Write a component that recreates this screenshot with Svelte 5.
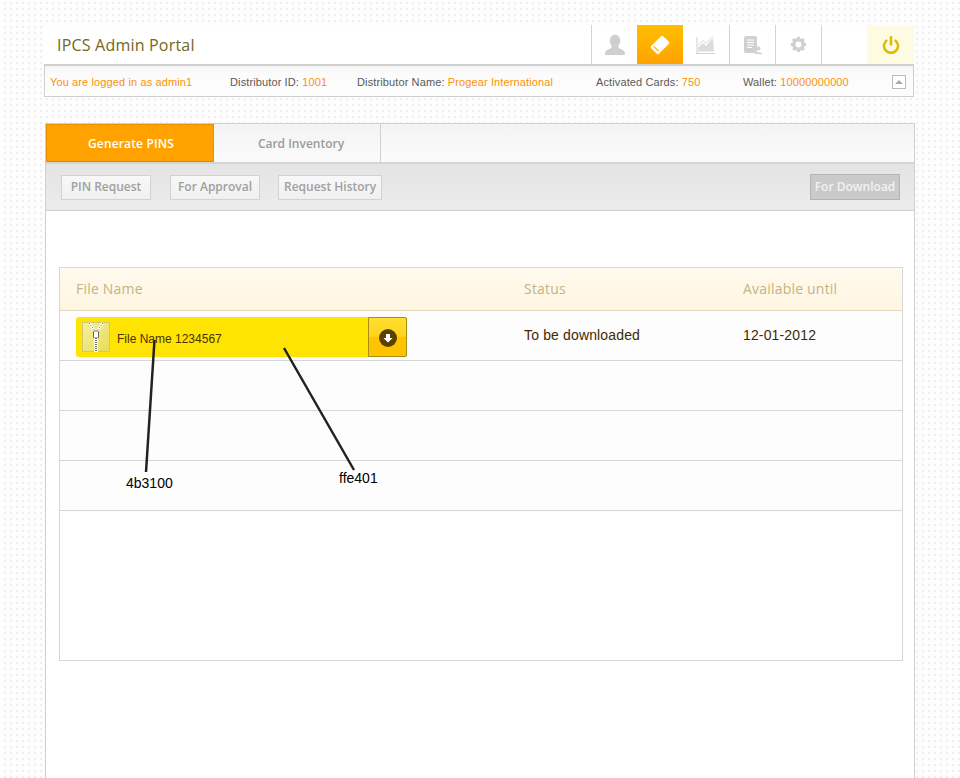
<script>
	let navIcons = ["user", "card", "chart", "report", "gear", "blank", "power"];
	let info = [
		{ label: "Distributor ID:", value: "1001" },
		{ label: "Distributor Name:", value: "Progear International" },
		{ label: "Activated Cards:", value: "750" },
		{ label: "Wallet:", value: "10000000000" },
	];
	let subTabs = ["PIN Request", "For Approval", "Request History"];
	let emptyRows = [1, 2, 3];
</script>

<div class="page">
	<header class="top">
		<h1>IPCS Admin Portal</h1>
		<nav>
			{#each navIcons as icon}
				<div class="nav-item {icon}">
					{#if icon == "user"}
						<svg width="22" height="22" viewBox="0 0 22 22" fill="#cfcfcf">
							<ellipse cx="11" cy="7" rx="5.2" ry="6.4" />
							<path d="M8 12 C8 15 3 15 1.5 17.5 L1 21 H21 L20.5 17.5 C19 15 14 15 14 12 Z" />
						</svg>
					{:else if icon == "card"}
						<svg width="22" height="22" viewBox="0 0 22 22">
							<g transform="rotate(-45 11 11)">
								<rect x="2.5" y="5.5" width="17" height="11" rx="1.5" fill="#fff" />
								<rect x="5" y="7.500" width="1.2" height="7" fill="#ffb400" />
							</g>
						</svg>
					{:else if icon == "chart"}
						<svg width="20" height="18" viewBox="0 0 20 18">
							<path d="M1 17 V1" stroke="#d2d2d2" fill="none" />
							<path d="M0 17.5 H19" stroke="#d2d2d2" fill="none" />
							<path d="M2 15.5 V12 L7 7 L10 10 L17 2 L18 15.5 Z" fill="#dcdcdc" />
							<path d="M2 9.5 L7 4.5 L10 7.5 L17 0.5" stroke="#d8d8d8" fill="none" />
						</svg>
					{:else if icon == "report"}
						<svg width="20" height="20" viewBox="0 0 20 20">
							<rect x="1" y="1" width="13" height="17" rx="2" fill="#d0d0d0" />
							<path d="M4 5 H11 M4 7.5 H11 M4 10 H11 M4 12.5 H9" stroke="#fff" />
							<circle cx="15.5" cy="13.5" r="2" fill="#d0d0d0" />
							<path d="M11.5 19 C12 16.5 19 16.5 19.5 19 Z" fill="#d0d0d0" />
						</svg>
					{:else if icon == "gear"}
						<svg width="17" height="17" viewBox="0 0 17 17">
							<circle cx="8.5" cy="8.5" r="4.7" fill="none" stroke="#d0d0d0" stroke-width="3.4" />
							<path d="M8.5 0.8 V16.2 M0.8 8.5 H16.2 M3 3 L14 14 M14 3 L3 14" stroke="#d0d0d0" stroke-width="3" stroke-dasharray="3 9.3" />
						</svg>
					{:else if icon == "power"}
						<svg width="18" height="18" viewBox="0 0 18 18" fill="none" stroke="#dcbc08" stroke-width="2.6">
							<path d="M5.2 4 A7 7 0 1 0 12.8 4" />
							<path d="M9 1 V8.5" stroke-linecap="round" />
						</svg>
					{/if}
				</div>
			{/each}
		</nav>
	</header>

	<div class="info">
		<span class="val">You are logged in as admin1</span>
		{#each info as item}
			<span>{item.label} <span class="val">{item.value}</span></span>
		{/each}
		<button class="collapse" aria-label="Collapse"><i></i></button>
	</div>

	<main>
		<div class="tabs">
			<div class="tab active">Generate PINS</div>
			<div class="tab">Card Inventory</div>
		</div>
		<div class="toolbar">
			{#each subTabs as label}
				<button class="sub">{label}</button>
			{/each}
			<button class="sub current">For Download</button>
		</div>

		<div class="content">
			<div class="table">
				<div class="row head">
					<div>File Name</div>
					<div>Status</div>
					<div>Available until</div>
				</div>
				<div class="row">
					<div class="file">
						<svg class="zip" width="28" height="30" viewBox="0 0 28 30">
							<defs>
								<linearGradient id="zipfill" x1="0" y1="0" x2="1" y2="1">
									<stop offset="0" stop-color="#f6f0a0" />
									<stop offset="1" stop-color="#e6dc58" />
								</linearGradient>
							</defs>
							<rect x="0.5" y="0.5" width="27" height="29" fill="url(#zipfill)" stroke="#cfc870" />
							<path d="M7 1 L13 9 M21 1 L15 9" stroke="#fff" stroke-width="2.500" />
							<path d="M7 1 L13 9 M21 1 L15 9" stroke="#666" stroke-dasharray="1 1.500" />
							<rect x="11.500" y="9" width="5" height="7" rx="1" fill="#fff" stroke="#666" />
							<path d="M14 16 V30" stroke="#fff" stroke-width="3.500" />
							<path d="M14 16 V30" stroke="#666" stroke-width="2" stroke-dasharray="1 1" />
						</svg>
						<span class="file-name">File Name 1234567</span>
						<button class="dl" aria-label="Download">
							<svg width="18" height="18" viewBox="0 0 18 18">
								<circle cx="9" cy="9" r="9" fill="#5c4000" />
								<path d="M7 5 H11 V9 H13.500 L9 13.500 L4.500 9 H7 Z" fill="#fff" />
							</svg>
						</button>
					</div>
					<div class="cell">To be downloaded</div>
					<div class="cell">12-01-2012</div>
				</div>
				{#each emptyRows as r}
					<div class="row"></div>
				{/each}
			</div>
		</div>
	</main>

	<!-- annotations laid over the mockup -->
	<svg class="notes" width="960" height="778" viewBox="0 0 960 778">
		<path d="M154.500 340 L146 472 M284 348 L354 470" stroke="#222" stroke-width="2.500" fill="none" />
	</svg>
	<span class="note" style="left: 126px; top: 475px">4b3100</span>
	<span class="note" style="left: 339px; top: 470px">ffe401</span>
</div>

<style>
	:global(body) {
		margin: 0;
		background-color: #fdfdfd;
		background-image: conic-gradient(at 2px 2px, transparent 75%, #eeeeee 0);
		background-size: 6px 6px;
		background-position: 4px 2px;
		overflow: hidden;
	}
	.page {
		position: relative;
		box-sizing: border-box;
		height: 778px;
		width: 960px;
		padding: 25px 45px 0 44px;
		display: flex;
		flex-direction: column;
		font-family: "Liberation Sans", Arial, sans-serif;
	}
	.top {
		display: flex;
		justify-content: space-between;
		align-items: stretch;
		height: 39px;
		padding-left: 13px;
		margin-right: 1px;
		background: #fff;
	}
	h1 {
		margin: 0;
		font: 400 16px/40px "Open Sans", sans-serif;
		color: #74661e;
		letter-spacing: 0.2px;
	}
	nav {
		display: flex;
	}
	.nav-item {
		box-sizing: border-box;
		width: 46px;
		border-left: 1px solid #d4d4d4;
		display: flex;
		align-items: center;
		justify-content: center;
	}
	.nav-item.card {
		background: linear-gradient(#ffbe00, #ffa200);
		border-left: none;
	}
	.nav-item.chart {
		border-left: none;
	}
	.nav-item.power {
		background: #fffbe3;
		border-left: none;
		width: 47px;
	}
	.info {
		box-sizing: border-box;
		height: 33px;
		margin-right: 1px;
		border: 1px solid #cfcfcf;
		border-top-width: 2px;
		background: linear-gradient(#f5f5f5, #fcfcfc 30%);
		display: grid;
		grid-template-columns: 180px 127px 239px 147px 1fr auto;
		align-items: center;
		padding: 1px 7px 0 5px;
		font-size: 11px;
		letter-spacing: 0.12px;
		color: #5a5a5a;
	}
	.val {
		color: #fb9208;
	}
	.collapse {
		width: 14px;
		height: 14px;
		padding: 0;
		border: 1px solid #bbb;
		background: #fff;
		display: flex;
		align-items: center;
		justify-content: center;
	}
	.collapse i {
		border: 4px solid transparent;
		border-top: none;
		border-bottom: 4px solid #aaa;
	}
	main {
		flex: 1;
		margin: 26px 0 0 1px;
		border: 1px solid #d0d0d0;
		border-bottom: none;
		background: #fff;
		display: flex;
		flex-direction: column;
	}
	.tabs {
		display: flex;
		height: 38px;
		border-bottom: 2px solid #d4d4d4;
		background: linear-gradient(#f3f3f3, #fbfbfb);
	}
	.tab {
		box-sizing: border-box;
		width: 167px;
		padding-left: 8px;
		border-right: 1px solid #d0d0d0;
		text-align: center;
		font: 600 12px/39px "Open Sans", sans-serif;
		color: #9b9b9b;
	}
	.tab.active {
		width: 168px;
		padding-left: 2px;
		background: #ffa200;
		color: #fff;
		letter-spacing: 0.15px;
		border: 1px solid #e89400;
		border-bottom: 1px solid #d98a00;
		line-height: 37px;
	}
	.toolbar {
		display: flex;
		align-items: center;
		height: 46px;
		padding: 0 14px 0 15px;
		gap: 18px;
		background: linear-gradient(#e4e4e4, #ececec);
		border-bottom: 1px solid #cfcfcf;
	}
	.sub {
		box-sizing: border-box;
		height: 25px;
		min-width: 90px;
		padding: 0 5px;
		border: 1px solid #d2d2d2;
		background: linear-gradient(#f8f8f8, #f0f0f0);
		font: 600 12px/1 "Open Sans", sans-serif;
		color: #a0a0a0;
	}
	.sub:first-child {
		margin-right: 1px;
	}
	.sub.current {
		margin-left: auto;
		width: 90px;
		height: 26px;
		padding: 0;
		background: #cacaca;
		border-color: #b4b4b4;
		color: #f2f2f2;
	}
	.content {
		flex: 1;
		padding: 56px 11px 0 13px;
	}
	.table {
		box-sizing: border-box;
		height: 394px;
		border: 1px solid #d6d6d6;
		border-top-color: #e2dabf;
	}
	.row {
		box-sizing: border-box;
		height: 50px;
		display: grid;
		grid-template-columns: 448px 219px 1fr;
		padding-left: 16px;
		border-bottom: 1px solid #d6d6d6;
		background: #fdfdfd;
	}
	.row.head {
		height: 43px;
		padding-bottom: 2px;
		align-items: center;
		background: linear-gradient(#fffaee, #fff6e2);
		border-bottom-color: #e2dabf;
		font: 400 14px "Open Sans", sans-serif;
		letter-spacing: 0.2px;
		color: #c4b384;
	}
	.file {
		box-sizing: border-box;
		margin-top: 6px;
		width: 331px;
		height: 40px;
		padding-left: 6px;
		border-radius: 3px;
		background: #ffe401;
		display: flex;
		align-items: center;
		gap: 7px;
		position: relative;
	}
	.file-name {
		flex: 1;
		padding-top: 3px;
		font-size: 12px;
		color: #4b3100;
	}
	.dl {
		box-sizing: border-box;
		width: 39px;
		height: 40px;
		padding: 1px 0 0;
		border: 1px solid #a98d12;
		border-radius: 0 2px 2px 0;
		background: linear-gradient(#ffdf30, #ffd21c 50%, #ffc400 50%);
		display: flex;
		align-items: center;
		justify-content: center;
	}
	.cell {
		font-size: 14px;
		letter-spacing: 0.15px;
		line-height: 49px;
		color: #3f2a00;
	}
	.notes {
		position: absolute;
		left: 0;
		top: 0;
		pointer-events: none;
	}
	.note {
		position: absolute;
		font-size: 14px;
		line-height: 16px;
		color: #000;
	}
</style>
